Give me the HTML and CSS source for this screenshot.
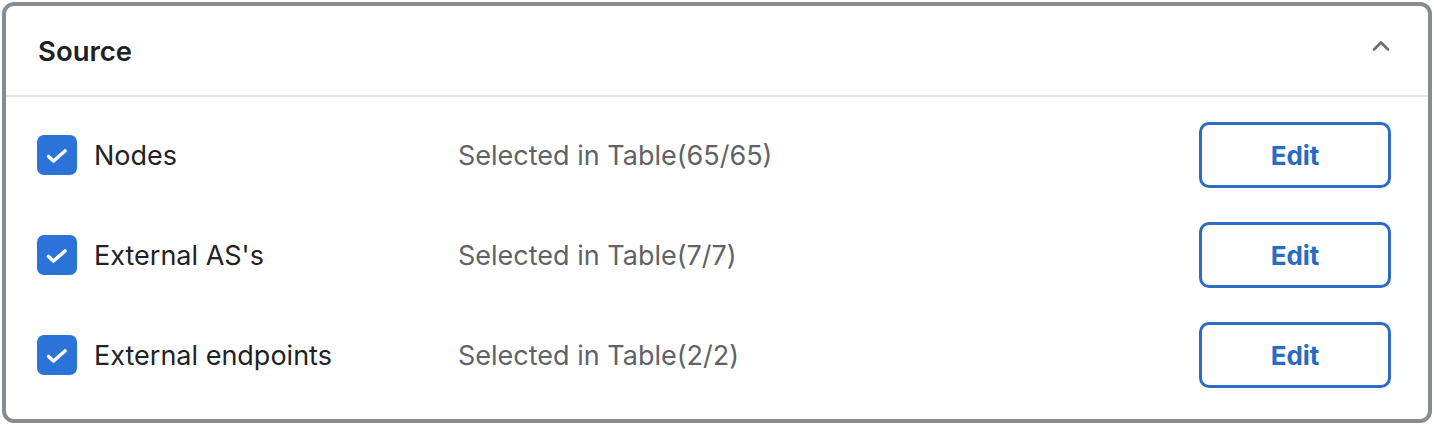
FILE: index.html
```html
<!DOCTYPE html>
<html lang="en">
<head>
    <meta charset="UTF-8">
    <title>Source</title>
    <link rel="stylesheet" href="styles.css">
</head>
<body>
    <div class="panel">
        <div class="panel-header">
            <h2>Source</h2>
            <svg class="chevron" width="18" height="12" viewBox="0 0 18 12">
                <path d="M2 9.5 L9 2.5 L16 9.5" fill="none" stroke="#6b7078" stroke-width="2.8" stroke-linecap="round" stroke-linejoin="round"/>
            </svg>
        </div>
        <div class="panel-body">
            <div class="row">
                <label class="check">
                    <span class="box"><svg width="40" height="40" viewBox="0 0 40 40"><path d="M11.5 21.5 L16.5 26 L28 16" fill="none" stroke="#fff" stroke-width="3.6" stroke-linecap="round" stroke-linejoin="round"/></svg></span>
                    <span class="name">Nodes</span>
                </label>
                <span class="info">Selected in Table(65/65)</span>
                <button class="edit">Edit</button>
            </div>
            <div class="row">
                <label class="check">
                    <span class="box"><svg width="40" height="40" viewBox="0 0 40 40"><path d="M11.5 21.5 L16.5 26 L28 16" fill="none" stroke="#fff" stroke-width="3.6" stroke-linecap="round" stroke-linejoin="round"/></svg></span>
                    <span class="name">External AS's</span>
                </label>
                <span class="info">Selected in Table(7/7)</span>
                <button class="edit">Edit</button>
            </div>
            <div class="row">
                <label class="check">
                    <span class="box"><svg width="40" height="40" viewBox="0 0 40 40"><path d="M11.5 21.5 L16.5 26 L28 16" fill="none" stroke="#fff" stroke-width="3.6" stroke-linecap="round" stroke-linejoin="round"/></svg></span>
                    <span class="name">External endpoints</span>
                </label>
                <span class="info">Selected in Table(2/2)</span>
                <button class="edit">Edit</button>
            </div>
        </div>
    </div>
</body>
</html>
```

FILE: styles.css
```css
body {
    margin: 0;
    background: #fff;
    font-family: Inter, "Noto Sans", sans-serif;
}
.panel {
    margin: 2px 2px 4px 2px;
    border: 4px solid #878c93;
    border-radius: 12px;
    height: 421px;
    box-sizing: border-box;
}
.panel-header {
    display: flex;
    align-items: center;
    justify-content: space-between;
    height: 89px;
    padding: 0 38px 0 32px;
    border-bottom: 2px solid #e3e4e6;
}
.panel-header h2 {
    margin: 0;
    font-size: 27.5px;
    font-weight: 600;
    color: #1f2124;
}
.chevron {
    margin-bottom: 10px;
}
.panel-body {
    padding: 25px 37px 0 31px;
    display: flex;
    flex-direction: column;
    gap: 34px;
}
.row {
    display: flex;
    align-items: center;
    height: 66px;
}
.check {
    display: flex;
    align-items: center;
    width: 421px;
}
.box {
    width: 40px;
    height: 40px;
    border-radius: 7px;
    background: #2b72d9;
    margin-right: 17px;
}
.box svg {
    display: block;
}
.name {
    font-size: 27px;
    color: #202225;
}
.info {
    font-size: 27px;
    color: #5f6368;
    flex: 1;
}
.edit {
    width: 192px;
    height: 66px;
    border: 3px solid #2b6cc4;
    border-radius: 10px;
    background: #fff;
    color: #2a6bc4;
    font-family: Inter, "Noto Sans", sans-serif;
    font-size: 26px;
    font-weight: 700;
}
```
